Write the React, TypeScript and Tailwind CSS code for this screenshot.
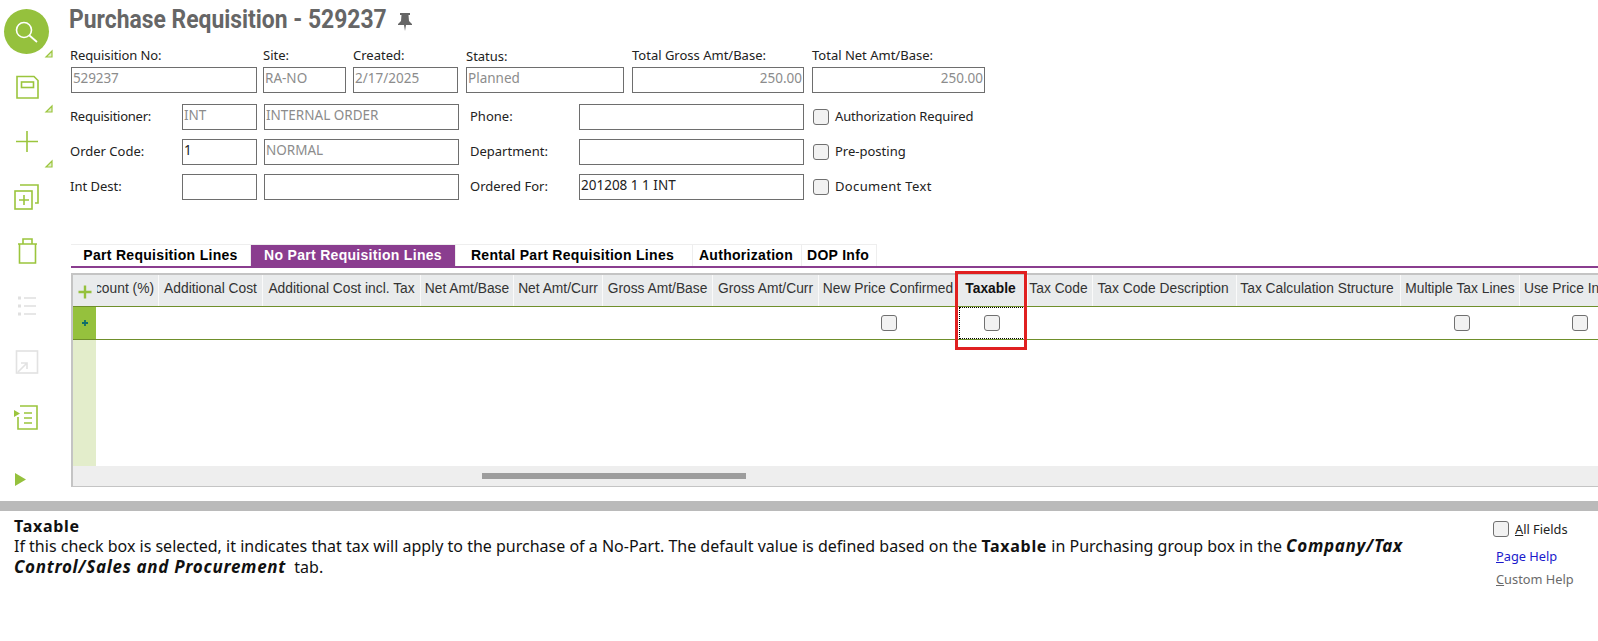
import React from 'react';

const tahoma = 'font-["Noto_Sans",sans-serif]';

const columns = [
  { label: 'Discount (%)', width: 'w-[62px]', align: 'justify-end pr-[4px]' },
  { label: 'Additional Cost', width: 'w-[104px]', align: 'justify-center' },
  { label: 'Additional Cost incl. Tax', width: 'w-[158px]', align: 'justify-center' },
  { label: 'Net Amt/Base', width: 'w-[93px]', align: 'justify-center' },
  { label: 'Net Amt/Curr', width: 'w-[89px]', align: 'justify-center' },
  { label: 'Gross Amt/Base', width: 'w-[110px]', align: 'justify-center' },
  { label: 'Gross Amt/Curr', width: 'w-[106px]', align: 'justify-center' },
  { label: 'New Price Confirmed', width: 'w-[139px]', align: 'justify-center' },
  { label: 'Taxable', width: 'w-[70px]', align: 'justify-center pr-[4px]', bold: true },
  { label: 'Tax Code', width: 'w-[65px]', align: 'justify-center pr-[3px]' },
  { label: 'Tax Code Description', width: 'w-[144px]', align: 'justify-center pr-[3px]' },
  { label: 'Tax Calculation Structure', width: 'w-[164px]', align: 'justify-center pr-[3px]' },
  { label: 'Multiple Tax Lines', width: 'w-[119px]', align: 'justify-center' },
  { label: 'Use Price Incl. Tax', width: 'w-[120px]', align: 'justify-start pl-[4px]' },
];

const Checkbox: React.FC<{ className?: string }> = ({ className = '' }) => (
  <span className={`block w-4 h-4 shrink-0 rounded-[3px] border border-[#707070] bg-[#f2f2f2] ${className}`} />
);

const Field: React.FC<{ value?: string; width: string; dark?: boolean; right?: boolean; className?: string }> = ({
  value,
  width,
  dark,
  right,
  className = '',
}) => (
  <div
    className={`${width} h-[26px] shrink-0 border border-[#6e6e6e] px-[1px] text-[13.5px] leading-[20px] whitespace-nowrap overflow-hidden ${
      dark ? 'text-[#222]' : 'text-[#8c8c8c]'
    } ${right ? 'text-right' : ''} ${className}`}
  >
    {value}
  </div>
);

const SideIcon: React.FC<{ children: React.ReactNode }> = ({ children }) => (
  <svg viewBox="0 0 56 56" className="w-14 h-14 block" fill="none" stroke="#9bc53d" strokeWidth="1.6">
    {children}
  </svg>
);

const Sidebar = () => (
  <div className="w-[69px] shrink-0 pt-1 flex flex-col">
    <SideIcon>
      <circle cx="26.5" cy="27.5" r="22.5" fill="#95c13d" stroke="none" />
      <circle cx="24" cy="26" r="7.5" stroke="#fff" />
      <path d="M29.5 31.5 L37 38" stroke="#fff" strokeWidth="1.8" />
      <path d="M46 53 L52 47 L52 53 Z" fill="#e4efcf" stroke="#9bc53d" strokeWidth="1.2" />
    </SideIcon>
    <SideIcon>
      <path d="M17 16.5 H34 L38 20.5 V38 H17 Z" />
      <rect x="21.5" y="22" width="12" height="5.5" />
      <path d="M46 52 L52 46 L52 52 Z" fill="#e4efcf" stroke="#9bc53d" strokeWidth="1.2" />
    </SideIcon>
    <SideIcon>
      <path d="M16 25.5 H38 M27 15 V36" />
      <path d="M46 51 L52 45 L52 51 Z" fill="#e4efcf" stroke="#9bc53d" strokeWidth="1.2" />
    </SideIcon>
    <SideIcon>
      <path d="M20 13 H38 V31 H35" />
      <rect x="15" y="19" width="17" height="18" />
      <path d="M24 23 V33 M19 28 H29" />
    </SideIcon>
    <SideIcon>
      <path d="M18 16 H37 M19.5 16 V35 H35.5 V16 M23 16 V11 H32 V16" />
    </SideIcon>
    <SideIcon>
      <path d="M18 14 H21 M18 22 H21 M18 30 H21" stroke="#e0e0e0" strokeWidth="3" />
      <path d="M24 14 H36 M24 22 H36 M24 30 H36" stroke="#e0e0e0" />
    </SideIcon>
    <SideIcon>
      <rect x="16.5" y="11" width="21" height="22" stroke="#e2e2e2" />
      <path d="M18 32 L27 23 M21 23 H27 V29" stroke="#e2e2e2" />
    </SideIcon>
    <SideIcon>
      <path d="M20 10 H37 V33 H18 V21" />
      <path d="M14 14 L20 17.5 L14 21 Z" fill="#9bc53d" stroke="none" />
      <path d="M24 17 H32 M24 22 H32 M24 27 H32" />
    </SideIcon>
    <svg viewBox="0 0 56 24" className="w-14 h-6 block mt-[19px]">
      <path d="M15 2 L26 8.5 L15 15 Z" fill="#95c13d" />
    </svg>
  </div>
);

const tabs = [
  { label: 'Part Requisition Lines', width: 'w-[180px]' },
  { label: 'No Part Requisition Lines', width: 'w-[205px]', active: true },
  { label: 'Rental Part Requisition Lines', width: 'w-[237px] pr-[3px]' },
  { label: 'Authorization', width: 'w-[109px] pr-[2px]' },
  { label: 'DOP Info', width: 'w-[75px] pr-[2px]' },
];

export default function App() {
  return (
    <div className={`w-[1598px] h-[641px] overflow-hidden bg-white text-[#222] flex flex-col ${tahoma}`}>
      <div className="h-[501px] flex shrink-0">
        <Sidebar />
        <div className="flex-1 min-w-0">
          <div className="h-[43px] pb-[5px] flex items-center">
            <h1 className='w-[317px] whitespace-nowrap origin-left scale-x-[0.915] font-["Roboto",sans-serif] font-bold text-[25px] leading-none text-[#666666]'>
              Purchase Requisition - 529237
            </h1>
            <svg viewBox="0 0 16 20" className="w-[16px] h-[20px] ml-[11px] mt-[5px]" fill="#666666">
              <path d="M3 1 H13 V3 H11.5 L12 9 L15 12 V13 H9 L8 19 L7 13 H1 V12 L4 9 L4.5 3 H3 Z" />
            </svg>
          </div>

          <div className="flex text-[13px] leading-[24px] pl-[2px]">
            <div className="w-[193px] -ml-px tracking-[-0.1px]">
              Requisition No:
              <Field value="529237" width="w-[186px]" className="ml-px" />
            </div>
            <div className="w-[90px]">
              Site:
              <Field value="RA-NO" width="w-[83px]" />
            </div>
            <div className="w-[113px]">
              Created:
              <Field value="2/17/2025" width="w-[105px]" />
            </div>
            <div className="w-[166px]">
              <span className="relative top-px">Status:</span>
              <Field value="Planned" width="w-[158px]" />
            </div>
            <div className="w-[180px]">
              Total Gross Amt/Base:
              <Field value="250.00" width="w-[172px]" right />
            </div>
            <div className="w-[173px]">
              Total Net Amt/Base:
              <Field value="250.00" width="w-[173px]" right />
            </div>
          </div>

          <div className="flex flex-col gap-[9px] mt-[11px] pl-[2px] text-[13px]">
            <div className="flex items-center">
              <span className="w-[111px] -ml-px mr-px tracking-[-0.25px]">Requisitioner:</span>
              <Field value="INT" width="w-[75px]" className="-mt-px" />
              <Field value="INTERNAL ORDER" width="w-[195px]" className="ml-[7px] -mt-px" />
              <span className="w-[120px] pl-[11px]">Phone:</span>
              <Field width="w-[225px]" />
              <Checkbox className="ml-[9px]" />
              <span className="ml-[6px] tracking-[-0.15px]">Authorization Required</span>
            </div>
            <div className="flex items-center">
              <span className="w-[111px] -ml-px mr-px">Order Code:</span>
              <Field value="1" dark width="w-[75px]" />
              <Field value="NORMAL" width="w-[195px]" className="ml-[7px]" />
              <span className="w-[120px] pl-[11px]">Department:</span>
              <Field width="w-[225px]" />
              <Checkbox className="ml-[9px]" />
              <span className="ml-[6px]">Pre-posting</span>
            </div>
            <div className="flex items-center">
              <span className="w-[111px] -ml-px mr-px">Int Dest:</span>
              <Field width="w-[75px]" />
              <Field width="w-[195px]" className="ml-[7px]" />
              <span className="w-[120px] pl-[11px]">Ordered For:</span>
              <Field value="201208 1 1 INT" dark width="w-[225px]" />
              <Checkbox className="ml-[9px]" />
              <span className="ml-[6px] tracking-[0.35px]">Document Text</span>
            </div>
          </div>

          <div className='mt-[44px] ml-[2px] font-["Liberation_Sans",Arial,sans-serif]'>
            <div className="flex h-[24px] border-b-2 border-[#8a3d8f]">
              {tabs.map((tab) => (
                <div
                  key={tab.label}
                  className={`${tab.width} flex items-center justify-center text-[14px] font-bold tracking-[0.3px] border-t border-r border-[#eeeeee] ${
                    tab.active ? 'bg-[#8a3d8f] text-white' : 'text-black'
                  }`}
                >
                  {tab.label}
                </div>
              ))}
            </div>

            <div className="relative mt-[5px] h-[214px] border-l-2 border-t-2 border-b border-[#c4c4c4] flex flex-col text-[13.8px] text-[#333] bg-white">
              <div className="flex h-[32px] shrink-0 bg-[#e9ebec] border-b border-[#6f8f2b] overflow-hidden">
                <div className="w-[24px] shrink-0 flex items-center justify-center pt-[3px]">
                  <svg viewBox="0 0 14 14" className="w-[14px] h-[14px]">
                    <path d="M7 0.5 V13.5 M0.5 7 H13.5" stroke="#95c13d" strokeWidth="2.4" />
                  </svg>
                </div>
                {columns.map((col) => (
                  <div
                    key={col.label}
                    className={`${col.width} shrink-0 flex items-center ${col.align} pb-[2px] overflow-hidden whitespace-nowrap border-r border-[#fafafa] ${
                      col.bold ? 'font-bold text-[#111]' : ''
                    }`}
                  >
                    {col.label}
                  </div>
                ))}
              </div>

              <div className="flex h-[33px] shrink-0 border-b border-[#6f8f2b]">
                <div className="w-[23px] shrink-0 bg-[#95c13d] flex items-center justify-center">
                  <svg viewBox="0 0 8 8" className="w-[6px] h-[6px]">
                    <path d="M4 0 V8 M0 4 H8" stroke="#0f6f6a" strokeWidth="2.4" />
                  </svg>
                </div>
                <div className="w-[863px] shrink-0 flex items-center justify-end pr-[62px]">
                  <Checkbox />
                </div>
                <div className="w-[66px] shrink-0 flex items-center justify-center border border-dotted border-black">
                  <Checkbox />
                </div>
                <div className="w-[445px] shrink-0 flex items-center justify-end">
                  <Checkbox />
                </div>
                <div className="w-[118px] shrink-0 flex items-center justify-end">
                  <Checkbox />
                </div>
              </div>

              <div className="flex-1 min-h-0">
                <div className="w-[23px] h-full bg-[#e3edcb]" />
              </div>

              <div className="h-[20px] shrink-0 bg-[#eeeeee] flex items-center pl-[409px]">
                <div className="w-[264px] h-[6px] bg-[#9d9d9d]" />
              </div>

              {/* red annotation round the Taxable column */}
              <div className="absolute left-[882px] -top-[4px] w-[72px] h-[79px] border-[3px] border-[#e02020] pointer-events-none" />
            </div>
          </div>
        </div>
      </div>

      <div className="h-[10px] shrink-0 bg-[#bababa]" />

      <div className="flex-1 flex justify-between">
        <div className="pl-[14px] pt-[5px] w-[1440px] text-[16px] leading-[21px] text-[#111]">
          <div className="font-bold tracking-[0.7px] leading-[20px]">Taxable</div>
          <p>
            If this check box is selected, it indicates that tax will apply to the purchase of a No-Part. The default value is defined based on the{' '}
            <b className="tracking-[0.7px]">Taxable</b> in Purchasing group box in the{' '}
            <b className="italic text-[17px] tracking-[0.7px] leading-[20px]">Company/Tax Control/Sales and Procurement</b>&nbsp; tab.
          </p>
        </div>
        <div className="w-[105px] shrink-0 pt-[8px] text-[12.8px] leading-[20px] text-[#222]">
          <div className="flex items-center">
            <Checkbox />
            <span className="ml-[6px]">
              <u>A</u>ll Fields
            </span>
          </div>
          <div className="ml-[3px] mt-[7px] text-[#1a1acc]">
            <u>P</u>age Help
          </div>
          <div className="ml-[3px] mt-[3px] text-[#6a6a6a]">
            <u>C</u>ustom Help
          </div>
        </div>
      </div>
    </div>
  );
}
